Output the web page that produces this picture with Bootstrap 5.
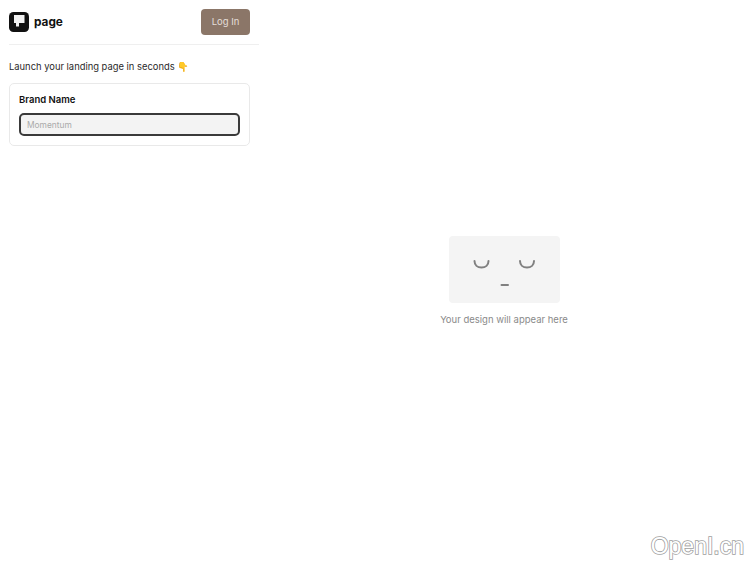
<!DOCTYPE html>
<html lang="en">
<head>
<meta charset="utf-8">
<title>page</title>
<link href="https://cdn.jsdelivr.net/npm/bootstrap@5.3.0/dist/css/bootstrap.min.css" rel="stylesheet">
<style>
html,body{height:100%;margin:0;overflow:hidden}
body{font-family:Inter,"Liberation Sans",sans-serif;color:#111;background:#fff}
.shell{height:562px;position:relative}
.side{width:259px;padding-left:9px;flex:none}
.top-bar{height:45px;border-bottom:1px solid #efefef;padding-right:9px}
.logo-text{font-size:11.8px;font-weight:700;line-height:1;margin:2px 0 0 5px}
.login-btn{background:#8b7668;color:#e4ded9;border:0;font-size:9.5px;height:26px;width:49px;padding:0;border-radius:4px}
.login-btn:hover{background:#8b7668;color:#e4ded9}
.intro{font-size:9.4px;margin:15px 0 9px;line-height:14px;color:#2a2a2a}
.form-box{width:241px;height:63px;border:1px solid #e9e9e9;border-radius:5px;padding:10px 9px}
.field-label{font-size:9.5px;font-weight:600;line-height:12px;margin-bottom:7px;color:#111}
.brand-input{height:23px;width:221px;font-size:8.4px;padding:0 0 0 6px;background:#f3f3f3;border:2px solid #3a3a3a;border-radius:5px;color:#111;caret-color:#555}
.brand-input::placeholder{color:#aaa}
.brand-input:focus{background:#f3f3f3;border-color:#3a3a3a;box-shadow:none}
.stage{padding-top:236px;padding-right:1px}
.face{width:111px;height:67px;background:#f4f4f4;border-radius:4px}
.hint{font-size:9.5px;color:#8a8a8a;margin-top:10px;line-height:14px}
.mark-text{position:absolute;right:6px;bottom:2px;font-family:"Liberation Sans",sans-serif;font-size:23px;line-height:28px;color:#fff;-webkit-text-stroke:1.6px #a0a0a0;paint-order:stroke fill}
</style>
</head>
<body>
<div class="shell d-flex">
  <aside class="side">
    <div class="top-bar d-flex align-items-center justify-content-between">
      <div class="d-flex align-items-center">
        <svg width="20" height="20" viewBox="0 0 20 20" aria-hidden="true"><rect width="20" height="20" rx="4.5" fill="#111"/><path d="M5 3h10.500v8h-5.500v3.500H7V11H5z" fill="#f2f2f2"/></svg>
        <span class="logo-text">page</span>
      </div>
      <button class="btn login-btn" type="button">Log In</button>
    </div>
    <p class="intro">Launch your landing page in seconds 👇</p>
    <div class="form-box">
      <label class="field-label d-block" for="brand">Brand Name</label>
      <input id="brand" class="form-control brand-input" placeholder="Momentum" autofocus>
    </div>
  </aside>
  <main class="stage flex-grow-1 d-flex flex-column align-items-center">
    <div class="face">
      <svg width="111" height="67" viewBox="0 0 111 67" aria-hidden="true" fill="none" stroke="#808080" stroke-linecap="round">
        <path d="M25.500 25c0 4 3 6.500 7 6.500s7-2.500 7-6.500" stroke-width="2"/>
        <path d="M71 25c0 4 3 6.500 7 6.500s7-2.500 7-6.500" stroke-width="2"/>
        <path d="M52.500 49h6.500" stroke-width="2"/>
      </svg>
    </div>
    <div class="hint">Your design will appear here</div>
  </main>
  <div class="mark-text">OpenI.cn</div>
</div>
<script src="https://cdn.jsdelivr.net/npm/bootstrap@5.3.0/dist/js/bootstrap.bundle.min.js"></script>
</body>
</html>
